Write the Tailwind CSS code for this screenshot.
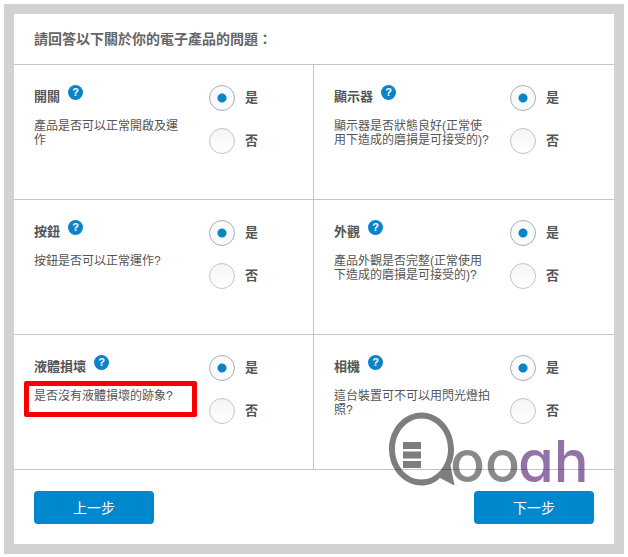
<!DOCTYPE html>
<html lang="zh-Hant">
<head>
<meta charset="utf-8">
<meta name="viewport" content="width=device-width, initial-scale=1">
<title>電子產品的問題</title>
<script src="https://cdn.jsdelivr.net/npm/@tailwindcss/browser@4"></script>
</head>
<body class="bg-white p-1 pb-[3px] font-['Liberation_Sans','Noto_Sans_CJK_TC',sans-serif] text-xs text-[#555]">
<main class="bg-[#d3d1d2] p-2.5">
<form class="relative bg-white">
  <h1 class="border-b border-[#c4c4c6] px-5 py-[13px] text-sm leading-6 font-bold text-[#666]">請回答以下關於你的電子產品的問題：</h1>
  <div class="grid grid-cols-2">

    <fieldset class="flex border-r border-b border-[#c4c4c6] pt-5 pb-[45px] pl-5">
      <div class="flex-1 pr-5">
        <div class="flex items-start gap-2"><h2 id="q1" class="text-[13px] leading-6 font-bold">開關</h2><button type="button" aria-label="說明" class="size-[15px] rounded-full bg-[#0a84c6] text-center text-[11px] leading-[15px] font-bold text-white">?</button></div>
        <p class="mt-2.5 leading-[14px]">產品是否可以正常開啟及運作</p>
      </div>
      <div role="radiogroup" aria-labelledby="q1" class="flex w-[104px] flex-col gap-[17px] text-[13px] font-bold">
        <label class="flex items-center gap-2.5"><input type="radio" name="a1" checked class="size-[26px] appearance-none rounded-full border border-[#c4c4c4] bg-linear-to-b from-[#f5f5f5] to-white checked:border-[#a9adb8] checked:bg-[radial-gradient(circle,#0a84c6_4px,#f8fafc_5px)]">是</label>
        <label class="flex items-center gap-2.5"><input type="radio" name="a1" class="size-[26px] appearance-none rounded-full border border-[#c4c4c4] bg-linear-to-b from-[#f5f5f5] to-white checked:border-[#a9adb8] checked:bg-[radial-gradient(circle,#0a84c6_4px,#f8fafc_5px)]">否</label>
      </div>
    </fieldset>

    <fieldset class="flex border-b border-[#c4c4c6] pt-5 pb-[45px] pl-5">
      <div class="flex-1 pr-5">
        <div class="flex items-start gap-2"><h2 id="q2" class="text-[13px] leading-6 font-bold">顯示器</h2><button type="button" aria-label="說明" class="size-[15px] rounded-full bg-[#0a84c6] text-center text-[11px] leading-[15px] font-bold text-white">?</button></div>
        <p class="mt-2.5 leading-[14px]">顯示器是否狀態良好(正常使用下造成的磨損是可接受的)?</p>
      </div>
      <div role="radiogroup" aria-labelledby="q2" class="flex w-[104px] flex-col gap-[17px] text-[13px] font-bold">
        <label class="flex items-center gap-2.5"><input type="radio" name="a2" checked class="size-[26px] appearance-none rounded-full border border-[#c4c4c4] bg-linear-to-b from-[#f5f5f5] to-white checked:border-[#a9adb8] checked:bg-[radial-gradient(circle,#0a84c6_4px,#f8fafc_5px)]">是</label>
        <label class="flex items-center gap-2.5"><input type="radio" name="a2" class="size-[26px] appearance-none rounded-full border border-[#c4c4c4] bg-linear-to-b from-[#f5f5f5] to-white checked:border-[#a9adb8] checked:bg-[radial-gradient(circle,#0a84c6_4px,#f8fafc_5px)]">否</label>
      </div>
    </fieldset>

    <fieldset class="flex border-r border-b border-[#c4c4c6] pt-5 pb-[45px] pl-5">
      <div class="flex-1 pr-5">
        <div class="flex items-start gap-2"><h2 id="q3" class="text-[13px] leading-6 font-bold">按鈕</h2><button type="button" aria-label="說明" class="size-[15px] rounded-full bg-[#0a84c6] text-center text-[11px] leading-[15px] font-bold text-white">?</button></div>
        <p class="mt-2.5 leading-[14px]">按鈕是否可以正常運作?</p>
      </div>
      <div role="radiogroup" aria-labelledby="q3" class="flex w-[104px] flex-col gap-[17px] text-[13px] font-bold">
        <label class="flex items-center gap-2.5"><input type="radio" name="a3" checked class="size-[26px] appearance-none rounded-full border border-[#c4c4c4] bg-linear-to-b from-[#f5f5f5] to-white checked:border-[#a9adb8] checked:bg-[radial-gradient(circle,#0a84c6_4px,#f8fafc_5px)]">是</label>
        <label class="flex items-center gap-2.5"><input type="radio" name="a3" class="size-[26px] appearance-none rounded-full border border-[#c4c4c4] bg-linear-to-b from-[#f5f5f5] to-white checked:border-[#a9adb8] checked:bg-[radial-gradient(circle,#0a84c6_4px,#f8fafc_5px)]">否</label>
      </div>
    </fieldset>

    <fieldset class="flex border-b border-[#c4c4c6] pt-5 pb-[45px] pl-5">
      <div class="flex-1 pr-5">
        <div class="flex items-start gap-2"><h2 id="q4" class="text-[13px] leading-6 font-bold">外觀</h2><button type="button" aria-label="說明" class="size-[15px] rounded-full bg-[#0a84c6] text-center text-[11px] leading-[15px] font-bold text-white">?</button></div>
        <p class="mt-2.5 leading-[14px]">產品外觀是否完整(正常使用下造成的磨損是可接受的)?</p>
      </div>
      <div role="radiogroup" aria-labelledby="q4" class="flex w-[104px] flex-col gap-[17px] text-[13px] font-bold">
        <label class="flex items-center gap-2.5"><input type="radio" name="a4" checked class="size-[26px] appearance-none rounded-full border border-[#c4c4c4] bg-linear-to-b from-[#f5f5f5] to-white checked:border-[#a9adb8] checked:bg-[radial-gradient(circle,#0a84c6_4px,#f8fafc_5px)]">是</label>
        <label class="flex items-center gap-2.5"><input type="radio" name="a4" class="size-[26px] appearance-none rounded-full border border-[#c4c4c4] bg-linear-to-b from-[#f5f5f5] to-white checked:border-[#a9adb8] checked:bg-[radial-gradient(circle,#0a84c6_4px,#f8fafc_5px)]">否</label>
      </div>
    </fieldset>

    <fieldset class="flex border-r border-b border-[#c4c4c6] pt-5 pb-[45px] pl-5">
      <div class="flex-1 pr-5">
        <div class="flex items-start gap-2"><h2 id="q5" class="text-[13px] leading-6 font-bold">液體損壞</h2><button type="button" aria-label="說明" class="size-[15px] rounded-full bg-[#0a84c6] text-center text-[11px] leading-[15px] font-bold text-white">?</button></div>
        <p class="relative mt-2.5 leading-[14px]">是否沒有液體損壞的跡象?<span class="absolute -top-2 -right-2 -left-2.5 h-9 rounded-xs border-5 border-[#f80000]"></span></p>
      </div>
      <div role="radiogroup" aria-labelledby="q5" class="flex w-[104px] flex-col gap-[17px] text-[13px] font-bold">
        <label class="flex items-center gap-2.5"><input type="radio" name="a5" checked class="size-[26px] appearance-none rounded-full border border-[#c4c4c4] bg-linear-to-b from-[#f5f5f5] to-white checked:border-[#a9adb8] checked:bg-[radial-gradient(circle,#0a84c6_4px,#f8fafc_5px)]">是</label>
        <label class="flex items-center gap-2.5"><input type="radio" name="a5" class="size-[26px] appearance-none rounded-full border border-[#c4c4c4] bg-linear-to-b from-[#f5f5f5] to-white checked:border-[#a9adb8] checked:bg-[radial-gradient(circle,#0a84c6_4px,#f8fafc_5px)]">否</label>
      </div>
    </fieldset>

    <fieldset class="flex border-b border-[#c4c4c6] pt-5 pb-[45px] pl-5">
      <div class="flex-1 pr-5">
        <div class="flex items-start gap-2"><h2 id="q6" class="text-[13px] leading-6 font-bold">相機</h2><button type="button" aria-label="說明" class="size-[15px] rounded-full bg-[#0a84c6] text-center text-[11px] leading-[15px] font-bold text-white">?</button></div>
        <p class="mt-2.5 leading-[14px]">這台裝置可不可以用閃光燈拍照?</p>
      </div>
      <div role="radiogroup" aria-labelledby="q6" class="flex w-[104px] flex-col gap-[17px] text-[13px] font-bold">
        <label class="flex items-center gap-2.5"><input type="radio" name="a6" checked class="size-[26px] appearance-none rounded-full border border-[#c4c4c4] bg-linear-to-b from-[#f5f5f5] to-white checked:border-[#a9adb8] checked:bg-[radial-gradient(circle,#0a84c6_4px,#f8fafc_5px)]">是</label>
        <label class="flex items-center gap-2.5"><input type="radio" name="a6" class="size-[26px] appearance-none rounded-full border border-[#c4c4c4] bg-linear-to-b from-[#f5f5f5] to-white checked:border-[#a9adb8] checked:bg-[radial-gradient(circle,#0a84c6_4px,#f8fafc_5px)]">否</label>
      </div>
    </fieldset>
  </div>

  <div class="flex justify-between px-5 pt-[21px] pb-5">
    <button type="button" class="h-[33px] w-[120px] rounded bg-[#0088ce] text-sm text-white">上一步</button>
    <button type="submit" class="h-[33px] w-[120px] rounded bg-[#0088ce] text-sm text-white">下一步</button>
  </div>

  <!-- Watermark: speech-bubble Q followed by the wordmark -->
  <svg class="pointer-events-none absolute right-7 bottom-14 h-[78px] w-[198px] overflow-visible" viewBox="0 0 198 78">
    <g opacity="0.5">
      <path fill-rule="evenodd" d="M33.500 2.500C51.500 2.500 66 19 66 39.500C66 45 65 50.500 62.500 55L66.500 75.500 52 68C47 73 40.500 75.500 33.500 75.500C15.500 75.500 1 59 1 39C1 19 15.500 2.500 33.500 2.500ZM33.500 8.500C19 8.500 7 22 7 39C7 56 19 69.500 33.500 69.500C48 69.500 60 56 60 39C60 22 48 8.500 33.500 8.500Z"/>
      <path d="M15 32h18v7H15zM15 41.500h18v7H15zM15 51h18v7H15z"/>
    </g>
    <g class="font-['Inter',sans-serif] text-[58px] font-medium [font-feature-settings:'cv11']">
      <text x="62" y="72" fill="#000" opacity="0.46">oo</text>
      <text x="130" y="72" fill="#3c0062" opacity="0.55">ah</text>
    </g>
  </svg>
</form>
</main>
</body>
</html>
